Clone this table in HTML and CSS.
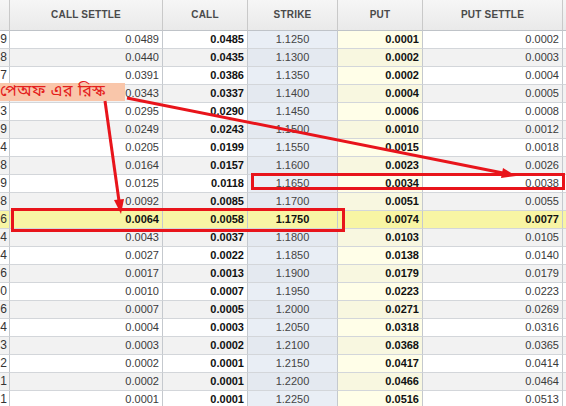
FILE: index.html
```html
<!DOCTYPE html>
<html lang="bn">
<head>
<meta charset="utf-8">
<title>Options table</title>
<link rel="stylesheet" href="styles.css">
</head>
<body>
<div class="sheet">
  <div class="grid">
    <div class="row head">
      <div class="c c0"></div>
      <div class="c c1">CALL SETTLE</div>
      <div class="c c2">CALL</div>
      <div class="c c3">STRIKE</div>
      <div class="c c4">PUT</div>
      <div class="c c5">PUT SETTLE</div>
      <div class="c c6"></div>
    </div>
    <div id="body"></div>
  </div>
  <div class="label">পেঅফ এর রিস্ক</div>
  <svg class="marks" width="566" height="406" viewBox="0 0 566 406">
    <g fill="none" stroke="#e8141b" stroke-width="3">
      <rect x="12.5" y="209.5" width="331" height="21"/>
      <rect x="252.5" y="174.5" width="311" height="14"/>
      <line x1="105" y1="101" x2="119" y2="201"/>
      <line x1="127" y1="98" x2="503" y2="173"/>
    </g>
    <g fill="#e8141b">
      <polygon points="121,214 114,200 124,199"/>
      <polygon points="516,176 503,168 501,178"/>
    </g>
  </svg>
</div>
<script src="app.js"></script>
</body>
</html>
```
FILE: app.js
```js
const lead = ["9","8","7","","3","9","4","8","9","8","6","4","4","6","0","6","4","3","2","1","1"];
const cs = ["0.0489","0.0440","0.0391","0.0343","0.0295","0.0249","0.0205","0.0164","0.0125","0.0092","0.0064","0.0043","0.0027","0.0017","0.0010","0.0007","0.0004","0.0003","0.0002","0.0002","0.0001"];
const call = ["0.0485","0.0435","0.0386","0.0337","0.0290","0.0243","0.0199","0.0157","0.0118","0.0085","0.0058","0.0037","0.0022","0.0013","0.0007","0.0005","0.0003","0.0002","0.0001","0.0001","0.0001"];
const put = ["0.0001","0.0002","0.0002","0.0004","0.0006","0.0010","0.0015","0.0023","0.0034","0.0051","0.0074","0.0103","0.0138","0.0179","0.0223","0.0271","0.0318","0.0368","0.0417","0.0466","0.0516"];
const ps = ["0.0002","0.0003","0.0004","0.0005","0.0008","0.0012","0.0018","0.0026","0.0038","0.0055","0.0077","0.0105","0.0140","0.0179","0.0223","0.0269","0.0316","0.0365","0.0414","0.0464","0.0513"];
const body = document.getElementById("body");
for (let i = 0; i < cs.length; i++) {
  const strike = (1.125 + i * 0.005).toFixed(4);
  const row = document.createElement("div");
  row.className = "row" + (i % 2 ? " odd" : "") + (i === 10 ? " atm" : "");
  row.innerHTML =
    '<div class="c c0">' + lead[i] + '</div>' +
    '<div class="c c1">' + cs[i] + '</div>' +
    '<div class="c c2">' + call[i] + '</div>' +
    '<div class="c c3">' + strike + '</div>' +
    '<div class="c c4">' + put[i] + '</div>' +
    '<div class="c c5">' + ps[i] + '</div>' +
    '<div class="c c6"></div>';
  body.appendChild(row);
}
```
FILE: styles.css
```css
html, body { margin: 0; padding: 0; background: #fff; }
body { width: 566px; height: 406px; overflow: hidden; font-family: "Liberation Sans", Arial, sans-serif; }
.sheet { position: relative; width: 566px; height: 406px; overflow: hidden; }
.row { display: flex; height: 18px; background: #fff; }
.row.odd { background: #f2f2f2; }
.c {
  box-sizing: border-box;
  height: 100%;
  border-right: 1px solid #c5c9ce;
  border-bottom: 1px solid #d3d6da;
  font-size: 11px;
  line-height: 17px;
  color: #3a3a3a;
  text-align: right;
  padding-right: 3px;
  white-space: nowrap;
  overflow: hidden;
  flex: none;
}
.c0 { width: 10px; padding-right: 2px; color: #333; font-size: 12px; }
.c1 { width: 153px; }
.c2 { width: 85px; font-weight: bold; color: #111; }
.c3 { width: 90px; text-align: center; padding-right: 0; background: #e9eef5; color: #444; }
.c4 { width: 85px; font-weight: bold; color: #111; background: #fffee8; }
.c5 { width: 140px; }
.c6 { flex: 1; border-right: none; }
.row.odd .c3 { background: #e4e9f0; }
.row.odd .c4 { background: #f8f7e0; }
.row.atm, .row.atm .c3, .row.atm .c4 { background: #f8f5a4; }
.row.atm .c1, .row.atm .c3, .row.atm .c5 { font-weight: bold; color: #111; }

.row.head { height: 31px; background: linear-gradient(#f6f6f6, #e9e9e9); }
.head .c {
  background: transparent;
  border-right-color: #c9c9c9;
  border-bottom-color: #bfc3c8;
  font-size: 10px;
  font-weight: bold;
  color: #4a4a4a;
  text-align: center;
  padding: 0;
  line-height: 30px;
  letter-spacing: 0.2px;
}

.label {
  position: absolute;
  left: 0;
  top: 83px;
  width: 125px;
  height: 18px;
  background: #f9c6aa;
  color: #e4201c;
  font-family: "Noto Sans Bengali", "Noto Sans", sans-serif;
  font-size: 16px;
  line-height: 18px;
  letter-spacing: 0.6px;
  white-space: nowrap;
}
.marks { position: absolute; left: 0; top: 0; pointer-events: none; }
```
